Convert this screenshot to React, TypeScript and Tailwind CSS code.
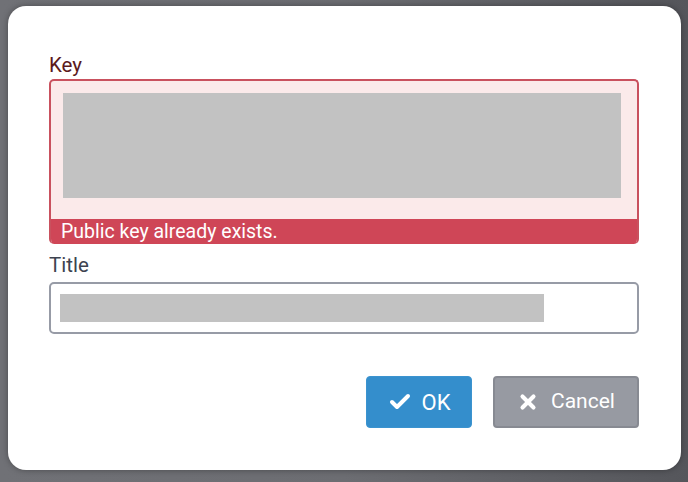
import { Check, X } from "lucide-react";

export default function App() {
  return (
    <div
      className="w-[688px] h-[482px] bg-gradient-to-r from-[#707176] via-[#6c6d72] to-[#55565b] pt-[6px] pl-[8px]"
      style={{ fontFamily: "Roboto, 'Liberation Sans', sans-serif" }}
    >
      <div className="w-[673px] h-[464px] bg-white rounded-[18px] shadow-[0_0_6px_rgba(0,0,0,0.35)] pt-[47px] px-[41px]">
        {/* Key field with error */}
        <label className="block text-[20.5px] leading-[24px] text-[#5b1a1c] mb-[2px]">Key</label>
        <div className="w-[590px] rounded-[5px] border-2 border-b-0 border-[#c9515e] bg-[#fbeaea] overflow-hidden">
          <div className="pt-[12px] pl-[12px] pr-[16px] pb-[21px]">
            <div className="h-[105px] bg-[#c2c2c2]" />
          </div>
          <div className="h-[25px] bg-[#cf4657] text-white text-[19.5px] leading-[25px] pl-[10px]">
            Public key already exists.
          </div>
        </div>

        {/* Title field */}
        <label className="block text-[20.5px] leading-[24px] text-[#3d4350] mt-[9px] mb-[5px]">Title</label>
        <div className="w-[590px] h-[52px] rounded-[5px] border-2 border-[#979ba6] bg-white pt-[10px] pl-[9px]">
          <div className="w-[484px] h-[28px] bg-[#c2c2c2]" />
        </div>

        {/* Actions */}
        <div className="flex justify-end gap-[21px] mt-[42px] pr-[1px]">
          <button className="w-[106px] h-[52px] rounded-[4px] bg-[#348ecc] border border-[#3b93cf] text-white text-[22px] flex items-center justify-center gap-[10px]">
            <Check className="w-[24px] h-[24px]" strokeWidth={4} />
            <span>OK</span>
          </button>
          <button className="w-[146px] h-[52px] rounded-[4px] bg-[#979aa2] border-2 border-[#878a92] text-white text-[21px] flex items-center justify-center gap-[12px]">
            <X className="w-[22px] h-[22px]" strokeWidth={4.5} />
            <span>Cancel</span>
          </button>
        </div>
      </div>
    </div>
  );
}
